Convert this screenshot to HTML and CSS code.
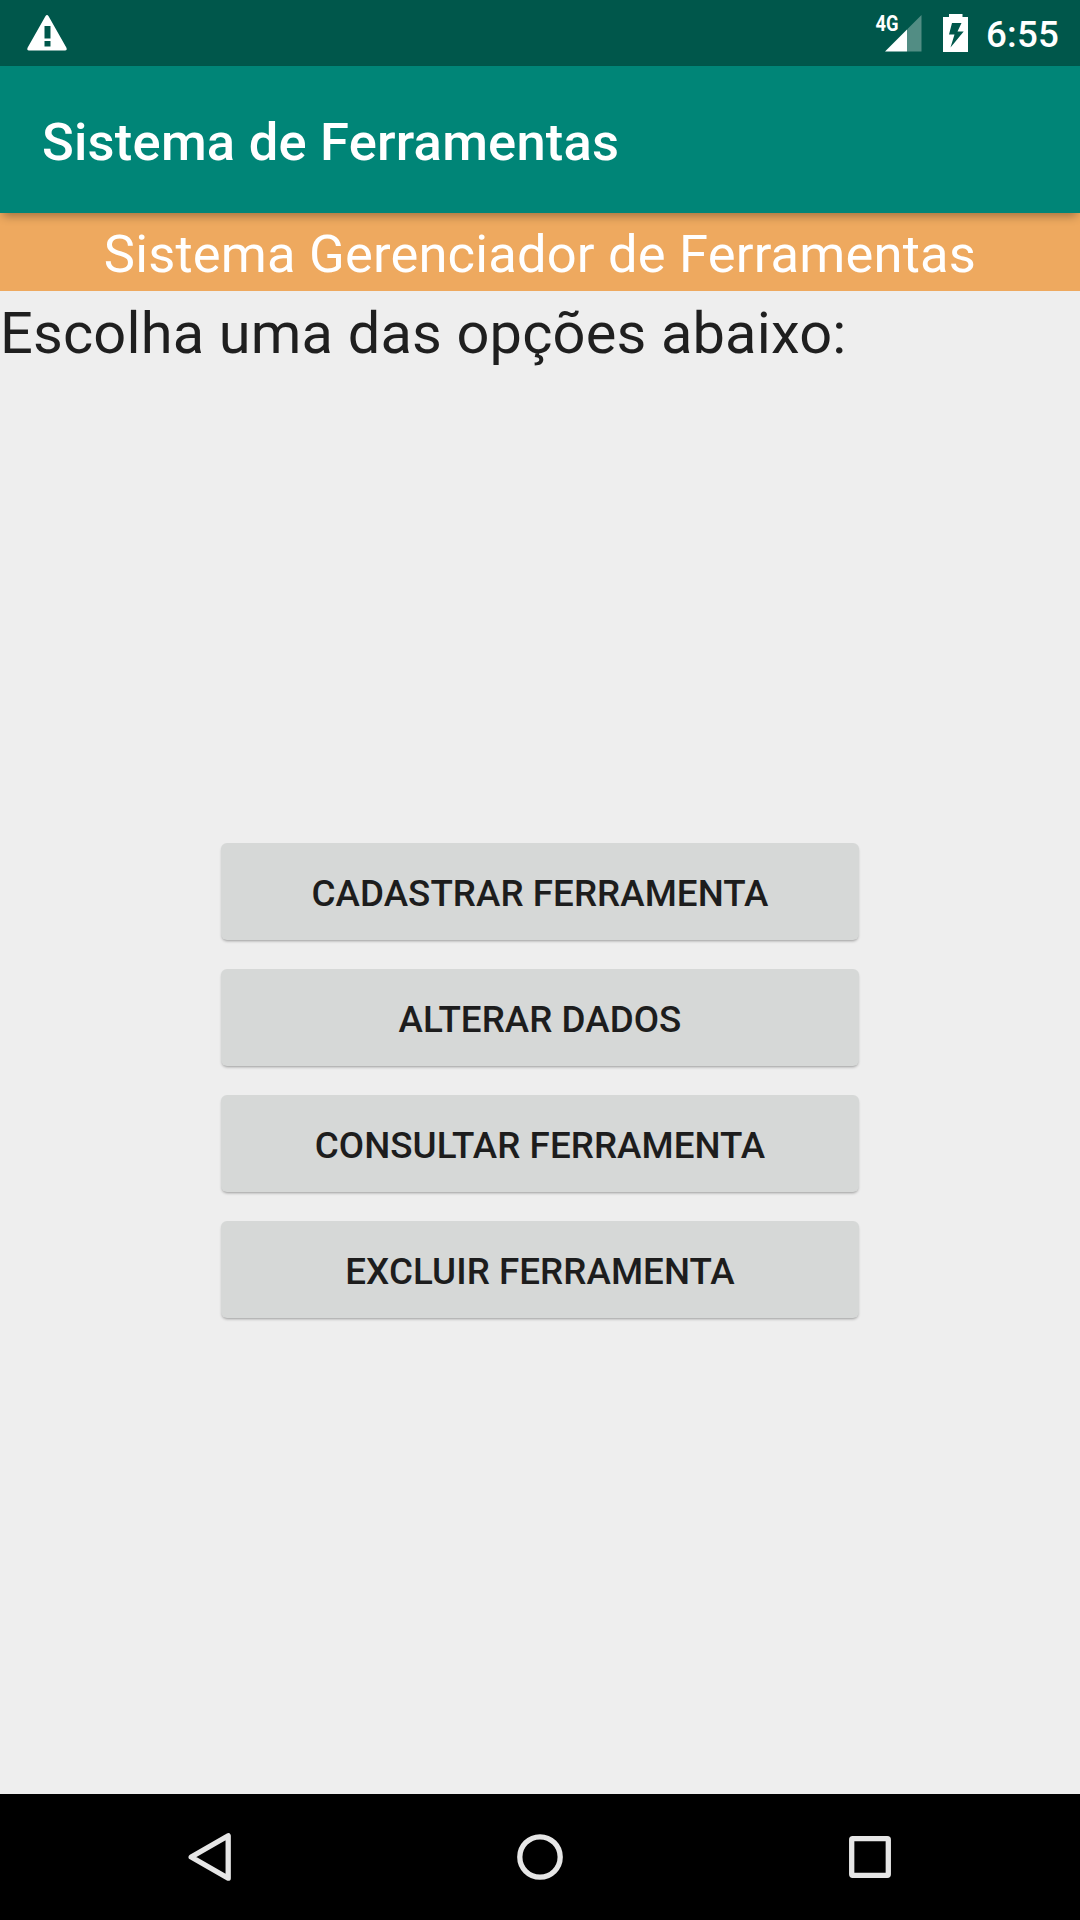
FILE: index.html
```html
<!DOCTYPE html>
<html lang="pt-BR">
<head>
<meta charset="utf-8">
<title>Sistema de Ferramentas</title>
<link rel="stylesheet" href="styles.css">
</head>
<body>
<div class="screen">
  <header class="status-bar">
    <svg class="icon-warning" width="42" height="38" viewBox="0 0 42 38">
      <path fill="#fff" fill-rule="evenodd" d="M19.4 2.2Q21 0 22.6 2.2L40.3 33.4Q41.6 36.4 39 36.5H3Q.4 36.4 1.7 33.4ZM18.5 12V24.5H24.5V12ZM18.5 27V32.5H24.5V27Z"/>
    </svg>
    <div class="status-right">
      <svg class="icon-signal" width="48" height="40" viewBox="0 0 48 40">
        <path fill="#fff" fill-opacity=".32" d="M33 15.5 47.5 1V37.5H33Z"/>
        <path fill="#fff" d="M11 37.5 33 15.5V37.5Z"/>
        <text class="network" x="1.5" y="17" textLength="23" lengthAdjust="spacingAndGlyphs">4G</text>
      </svg>
      <svg class="icon-battery" width="25" height="38" viewBox="0 0 25 38">
        <path fill="#fff" fill-rule="evenodd" d="M6 0H19.5V3H25V38H0V3H6ZM9 9 6 20.5H11.5L7.5 33.5 20.7 17.5H14.5L18.5 9Z"/>
      </svg>
      <span class="clock">6:55</span>
    </div>
  </header>
  <div class="app-bar"><h1 class="app-title">Sistema de Ferramentas</h1></div>
  <main class="content">
    <h2 class="banner">Sistema Gerenciador de Ferramentas</h2>
    <p class="prompt">Escolha uma das opções abaixo:</p>
    <div class="actions">
      <button class="action" type="button">CADASTRAR FERRAMENTA</button>
      <button class="action" type="button">ALTERAR DADOS</button>
      <button class="action" type="button">CONSULTAR FERRAMENTA</button>
      <button class="action" type="button">EXCLUIR FERRAMENTA</button>
    </div>
  </main>
  <nav class="nav-bar">
    <svg class="nav-icon" width="60" height="60" viewBox="0 0 60 60">
      <path d="M11.2 30 48.2 8.8V51.2Z"/>
    </svg>
    <svg class="nav-icon" width="60" height="60" viewBox="0 0 60 60">
      <circle cx="30" cy="30" r="20.2"/>
    </svg>
    <svg class="nav-icon" width="60" height="60" viewBox="0 0 60 60">
      <rect x="11.7" y="11.7" width="36.6" height="36.6" rx="1"/>
    </svg>
  </nav>
</div>
</body>
</html>
```
FILE: styles.css
```css
* { box-sizing: border-box; }

body {
  margin: 0;
  font-family: Roboto, sans-serif;
}

.screen {
  display: flex;
  flex-direction: column;
  width: 1080px;
  height: 1920px;
  background: #eeeeee;
  overflow: hidden;
}

.status-bar {
  display: flex;
  justify-content: space-between;
  height: 66px;
  padding: 14px 21px 0 26px;
  background: #00574b;
}

.status-right {
  display: flex;
  align-items: flex-start;
}

.icon-signal { overflow: visible; }

.icon-battery { margin-left: 21px; }

.network {
  font-size: 21.5px;
  font-weight: 700;
  fill: #fff;
}

.clock {
  margin-left: 18px;
  font-size: 36.75px;
  font-weight: 500;
  letter-spacing: 0.15px;
  line-height: 41px;
  color: #fff;
}

.app-bar {
  position: relative;
  z-index: 1;
  display: flex;
  align-items: center;
  height: 147px;
  padding: 4px 42px 0;
  background: #008577;
  box-shadow: 0 6px 9px -3px rgba(0, 0, 0, 0.32);
}

.app-title {
  margin: 0;
  font-size: 52.5px;
  font-weight: 500;
  letter-spacing: 0.22px;
  color: #fff;
}

.content {
  display: flex;
  flex: 1;
  flex-direction: column;
}

.banner {
  height: 78px;
  margin: 0;
  padding-top: 4px;
  background: #eea95f;
  color: #fff;
  font-size: 52.5px;
  font-weight: 400;
  letter-spacing: 0.18px;
  line-height: 75px;
  text-align: center;
}

.prompt {
  margin: 0;
  color: #1f1f1f;
  font-size: 57.75px;
  letter-spacing: 0.17px;
  line-height: 84px;
}

.actions {
  display: flex;
  flex-direction: column;
  gap: 29px;
  width: 638px;
  margin: 468px 0 0 221px;
}

.action {
  height: 97px;
  padding: 4px 0 0;
  border: 0;
  border-radius: 6px;
  background: #d6d8d7;
  box-shadow: 0 2px 3px -1px rgba(0, 0, 0, 0.36);
  color: #1d1d1d;
  font-family: inherit;
  font-size: 36.75px;
  font-weight: 500;
  letter-spacing: 0.05px;
}

.nav-bar {
  display: flex;
  justify-content: space-between;
  height: 126px;
  padding: 33px 180px 0;
  background: #000;
}

.nav-icon {
  fill: none;
  stroke: #e6e6e6;
  stroke-width: 5.3;
  stroke-linejoin: round;
}
```
